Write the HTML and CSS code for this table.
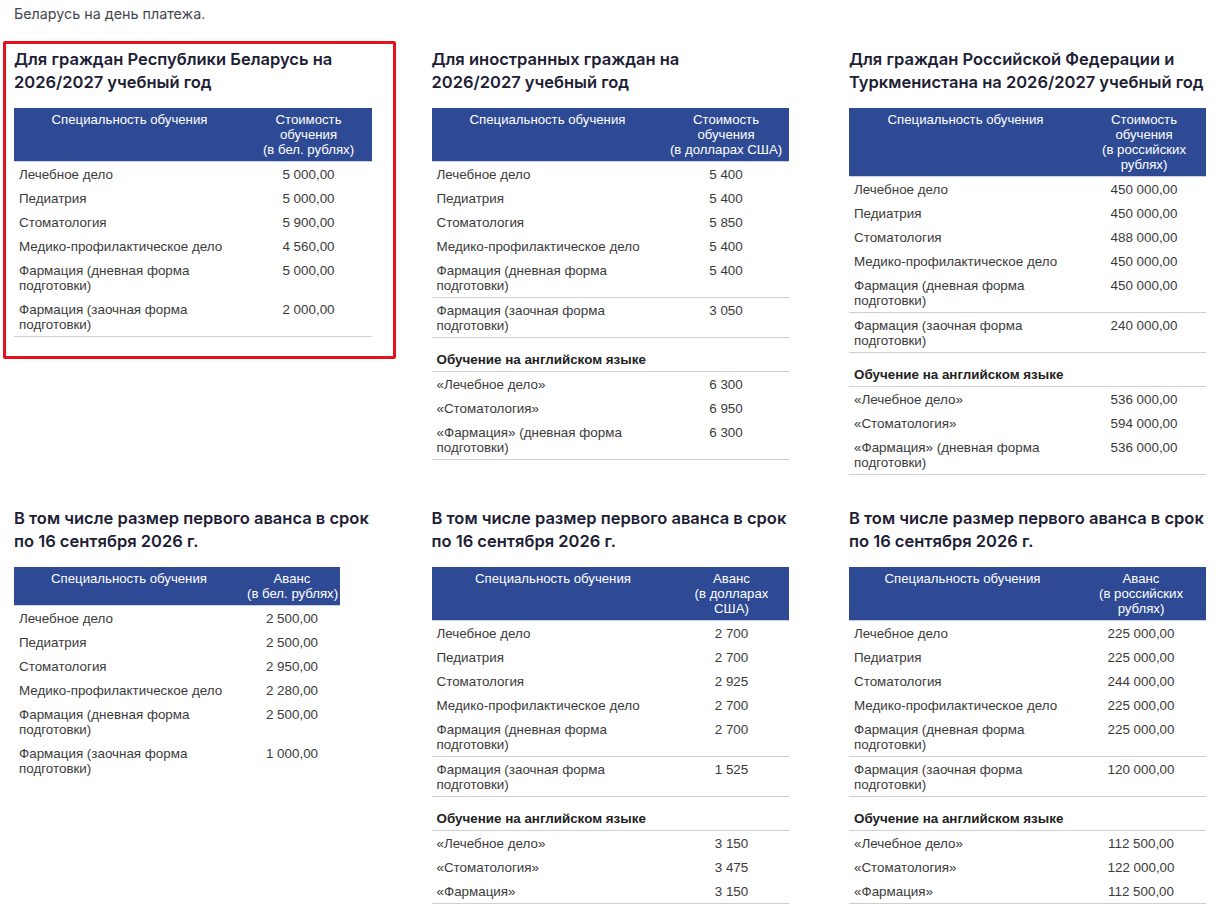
FILE: index.html
```html
<!DOCTYPE html>
<html lang="ru">
<head>
<meta charset="utf-8">
<title>Стоимость обучения</title>
<link rel="stylesheet" href="styles.css">
</head>
<body>
<div class="page">
  <p class="intro">Оплата за обучение иностранными гражданами производится в белорусских рублях по официальному курсу доллара США, установленному Национальным банком Республики<br>Беларусь на день платежа.</p>

  <div class="grid">
    <section class="block highlighted">
      <h3 class="title">Для граждан Республики Беларусь на<br>2026/2027 учебный год</h3>
      <table class="price t-by">
        <colgroup><col class="c1"><col class="c2"></colgroup>
        <thead><tr><th>Специальность обучения</th><th>Стоимость<br>обучения<br>(в бел. рублях)</th></tr></thead>
        <tbody>
          <tr><td>Лечебное дело</td><td class="v">5 000,00</td></tr>
          <tr><td>Педиатрия</td><td class="v">5 000,00</td></tr>
          <tr><td>Стоматология</td><td class="v">5 900,00</td></tr>
          <tr><td>Медико-профилактическое дело</td><td class="v">4 560,00</td></tr>
          <tr><td>Фармация (дневная форма подготовки)</td><td class="v">5 000,00</td></tr>
          <tr class="line"><td>Фармация (заочная форма подготовки)</td><td class="v">2 000,00</td></tr>
        </tbody>
      </table>
    </section>

    <section class="block">
      <h3 class="title">Для иностранных граждан на<br>2026/2027 учебный год</h3>
      <table class="price t-us">
        <colgroup><col class="c1"><col class="c2"></colgroup>
        <thead><tr><th>Специальность обучения</th><th>Стоимость<br>обучения<br>(в долларах США)</th></tr></thead>
        <tbody>
          <tr><td>Лечебное дело</td><td class="v">5 400</td></tr>
          <tr><td>Педиатрия</td><td class="v">5 400</td></tr>
          <tr><td>Стоматология</td><td class="v">5 850</td></tr>
          <tr><td>Медико-профилактическое дело</td><td class="v">5 400</td></tr>
          <tr class="line"><td>Фармация (дневная форма подготовки)</td><td class="v">5 400</td></tr>
          <tr class="line"><td>Фармация (заочная форма подготовки)</td><td class="v">3 050</td></tr>
          <tr class="line section"><td colspan="2">Обучение на английском языке</td></tr>
          <tr><td>«Лечебное дело»</td><td class="v">6 300</td></tr>
          <tr><td>«Стоматология»</td><td class="v">6 950</td></tr>
          <tr class="line"><td>«Фармация» (дневная форма подготовки)</td><td class="v">6 300</td></tr>
        </tbody>
      </table>
    </section>

    <section class="block">
      <h3 class="title">Для граждан Российской Федерации и<br>Туркменистана на 2026/2027 учебный год</h3>
      <table class="price t-ru">
        <colgroup><col class="c1"><col class="c2"></colgroup>
        <thead><tr><th>Специальность обучения</th><th>Стоимость<br>обучения<br>(в российских<br>рублях)</th></tr></thead>
        <tbody>
          <tr><td>Лечебное дело</td><td class="v">450 000,00</td></tr>
          <tr><td>Педиатрия</td><td class="v">450 000,00</td></tr>
          <tr><td>Стоматология</td><td class="v">488 000,00</td></tr>
          <tr><td>Медико-профилактическое дело</td><td class="v">450 000,00</td></tr>
          <tr class="line"><td>Фармация (дневная форма подготовки)</td><td class="v">450 000,00</td></tr>
          <tr class="line"><td>Фармация (заочная форма подготовки)</td><td class="v">240 000,00</td></tr>
          <tr class="line section"><td colspan="2">Обучение на английском языке</td></tr>
          <tr><td>«Лечебное дело»</td><td class="v">536 000,00</td></tr>
          <tr><td>«Стоматология»</td><td class="v">594 000,00</td></tr>
          <tr class="line"><td>«Фармация» (дневная форма подготовки)</td><td class="v">536 000,00</td></tr>
        </tbody>
      </table>
    </section>

    <section class="block">
      <h3 class="title">В том числе размер первого аванса в срок<br>по 16 сентября 2026 г.</h3>
      <table class="price a-by">
        <colgroup><col class="c1"><col class="c2"></colgroup>
        <thead><tr><th>Специальность обучения</th><th>Аванс<br>(в бел. рублях)</th></tr></thead>
        <tbody>
          <tr><td>Лечебное дело</td><td class="v">2 500,00</td></tr>
          <tr><td>Педиатрия</td><td class="v">2 500,00</td></tr>
          <tr><td>Стоматология</td><td class="v">2 950,00</td></tr>
          <tr><td>Медико-профилактическое дело</td><td class="v">2 280,00</td></tr>
          <tr><td>Фармация (дневная форма подготовки)</td><td class="v">2 500,00</td></tr>
          <tr><td>Фармация (заочная форма подготовки)</td><td class="v">1 000,00</td></tr>
        </tbody>
      </table>
    </section>

    <section class="block">
      <h3 class="title">В том числе размер первого аванса в срок<br>по 16 сентября 2026 г.</h3>
      <table class="price a-us">
        <colgroup><col class="c1"><col class="c2"></colgroup>
        <thead><tr><th>Специальность обучения</th><th>Аванс<br>(в долларах<br>США)</th></tr></thead>
        <tbody>
          <tr><td>Лечебное дело</td><td class="v">2 700</td></tr>
          <tr><td>Педиатрия</td><td class="v">2 700</td></tr>
          <tr><td>Стоматология</td><td class="v">2 925</td></tr>
          <tr><td>Медико-профилактическое дело</td><td class="v">2 700</td></tr>
          <tr class="line"><td>Фармация (дневная форма подготовки)</td><td class="v">2 700</td></tr>
          <tr class="line"><td>Фармация (заочная форма подготовки)</td><td class="v">1 525</td></tr>
          <tr class="line section"><td colspan="2">Обучение на английском языке</td></tr>
          <tr><td>«Лечебное дело»</td><td class="v">3 150</td></tr>
          <tr><td>«Стоматология»</td><td class="v">3 475</td></tr>
          <tr class="line"><td>«Фармация»</td><td class="v">3 150</td></tr>
        </tbody>
      </table>
    </section>

    <section class="block">
      <h3 class="title">В том числе размер первого аванса в срок<br>по 16 сентября 2026 г.</h3>
      <table class="price a-ru">
        <colgroup><col class="c1"><col class="c2"></colgroup>
        <thead><tr><th>Специальность обучения</th><th>Аванс<br>(в российских<br>рублях)</th></tr></thead>
        <tbody>
          <tr><td>Лечебное дело</td><td class="v">225 000,00</td></tr>
          <tr><td>Педиатрия</td><td class="v">225 000,00</td></tr>
          <tr><td>Стоматология</td><td class="v">244 000,00</td></tr>
          <tr><td>Медико-профилактическое дело</td><td class="v">225 000,00</td></tr>
          <tr class="line"><td>Фармация (дневная форма подготовки)</td><td class="v">225 000,00</td></tr>
          <tr class="line"><td>Фармация (заочная форма подготовки)</td><td class="v">120 000,00</td></tr>
          <tr class="line section"><td colspan="2">Обучение на английском языке</td></tr>
          <tr><td>«Лечебное дело»</td><td class="v">112 500,00</td></tr>
          <tr><td>«Стоматология»</td><td class="v">122 000,00</td></tr>
          <tr class="line"><td>«Фармация»</td><td class="v">112 500,00</td></tr>
        </tbody>
      </table>
    </section>
  </div>
</div>
</body>
</html>
```
FILE: styles.css
```css
html, body {
  margin: 0;
  padding: 0;
  background: #ffffff;
}

body {
  font-family: "Liberation Sans", Arial, sans-serif;
  overflow: hidden;
}

.page {
  padding: 0 0 0 14px;
}

.intro {
  margin: -19px 0 0 0;
  font-family: Inter, "Noto Sans", sans-serif;
  font-size: 14.3px;
  line-height: 22px;
  color: #45474f;
  white-space: nowrap;
}

.grid {
  display: grid;
  grid-template-columns: 358px 358px 358px;
  column-gap: 59.5px;
  row-gap: 32px;
  margin-top: 23px;
  align-items: start;
}

.block {
  position: relative;
}

.highlighted::before {
  content: "";
  position: absolute;
  top: -7px;
  left: -11px;
  right: -24px;
  bottom: -22px;
  border: 3px solid #e3111b;
  border-radius: 2px;
  pointer-events: none;
}

.title {
  margin: 0 0 14px 0;
  font-family: Inter, "Noto Sans", sans-serif;
  font-weight: 600;
  font-size: 16.5px;
  letter-spacing: 0;
  line-height: 23px;
  color: #1d2034;
  white-space: nowrap;
}

.price {
  border-collapse: collapse;
  table-layout: fixed;
  font-size: 13.4px;
  line-height: 15px;
  color: #3b3b3b;
}

.price th {
  background: #2e4a94;
  color: #ffffff;
  font-weight: normal;
  font-size: 13.2px;
  text-align: center;
  vertical-align: top;
  padding: 4px 3px 4px;
  border-bottom: 1px solid #c9d0e2;
  white-space: nowrap;
}

.price td {
  padding: 5px 5px 4px;
  vertical-align: top;
  text-align: left;
}

.price td.v {
  text-align: center;
}

.price tr.line td {
  border-bottom: 1px solid #cfcfcf;
}

.price tr.section td {
  padding-top: 14px;
  font-weight: bold;
  color: #222222;
}

.t-by { width: 358px; }
.t-by .c1 { width: 231px; }
.t-by .c2 { width: 127px; }

.t-us { width: 357px; }
.t-us .c1 { width: 232px; }
.t-us .c2 { width: 125px; }

.t-ru { width: 357px; }
.t-ru .c1 { width: 233px; }
.t-ru .c2 { width: 124px; }

.a-by { width: 326px; }
.a-by .c1 { width: 230px; }
.a-by .c2 { width: 96px; }

.a-us { width: 357px; }
.a-us .c1 { width: 243px; }
.a-us .c2 { width: 114px; }

.a-ru { width: 357px; }
.a-ru .c1 { width: 227px; }
.a-ru .c2 { width: 130px; }
```
